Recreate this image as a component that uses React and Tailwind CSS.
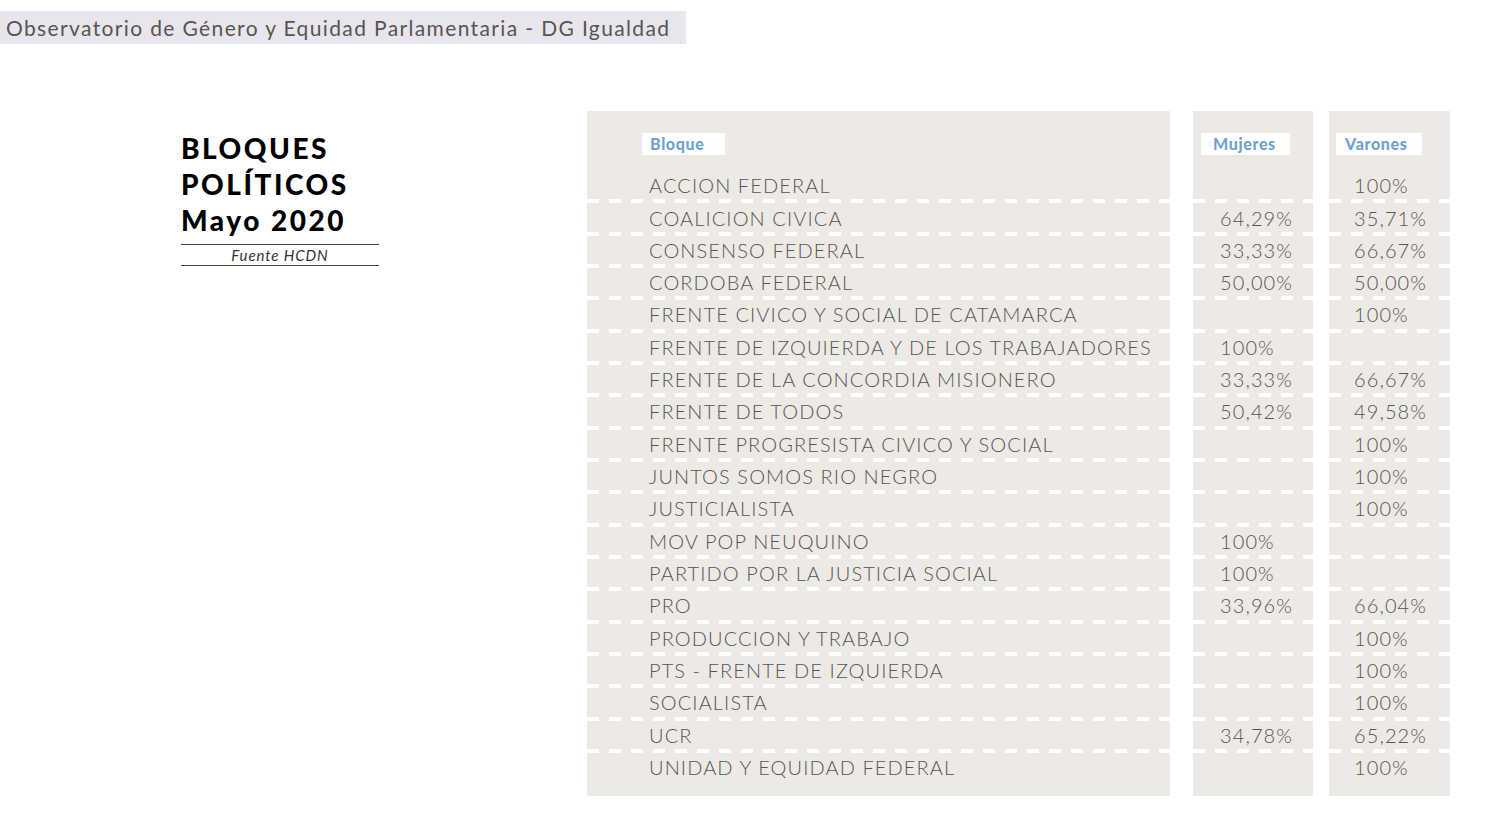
import React from 'react';

const rows = [
  ['ACCION FEDERAL', '', '100%'],
  ['COALICION CIVICA', '64,29%', '35,71%'],
  ['CONSENSO FEDERAL', '33,33%', '66,67%'],
  ['CORDOBA FEDERAL', '50,00%', '50,00%'],
  ['FRENTE CIVICO Y SOCIAL DE CATAMARCA', '', '100%'],
  ['FRENTE DE IZQUIERDA Y DE LOS TRABAJADORES', '100%', ''],
  ['FRENTE DE LA CONCORDIA MISIONERO', '33,33%', '66,67%'],
  ['FRENTE DE TODOS', '50,42%', '49,58%'],
  ['FRENTE PROGRESISTA CIVICO Y SOCIAL', '', '100%'],
  ['JUNTOS SOMOS RIO NEGRO', '', '100%'],
  ['JUSTICIALISTA', '', '100%'],
  ['MOV POP NEUQUINO', '100%', ''],
  ['PARTIDO POR LA JUSTICIA SOCIAL', '100%', ''],
  ['PRO', '33,96%', '66,04%'],
  ['PRODUCCION Y TRABAJO', '', '100%'],
  ['PTS - FRENTE DE IZQUIERDA', '', '100%'],
  ['SOCIALISTA', '', '100%'],
  ['UCR', '34,78%', '65,22%'],
  ['UNIDAD Y EQUIDAD FEDERAL', '', '100%'],
];

const dash = 'h-[4px] bg-[repeating-linear-gradient(90deg,#ffffff_0px,#ffffff_12px,transparent_12px,transparent_22px)]';

function Column({ width, label, labelBox, cellPad, idx }) {
  return (
    <div className={`${width} bg-[#edeae6] pt-[22px] pb-[15px] flex flex-col`}>
      <div className={`h-[22px] bg-white text-[16px] font-black tracking-[0.04em] text-[#6fa3cf] leading-[22px] ${labelBox}`}>
        {label}
      </div>
      <div className="mt-[16px] flex flex-col">
        {rows.map((r, i) => (
          <React.Fragment key={i}>
            <div className={`h-[28.33px] flex items-center whitespace-nowrap text-[20px] font-light tracking-[0.055em] text-[#555555] ${cellPad}`}>
              {r[idx]}
            </div>
            {i < rows.length - 1 && <div className={dash} />}
          </React.Fragment>
        ))}
      </div>
    </div>
  );
}

export default function App() {
  return (
    <div className="min-h-screen w-full bg-white font-['Lato',sans-serif]">
      <div className="pt-[11px]">
        <div className="w-[686px] h-[33px] bg-[#e9e5ec] pl-[6px] flex items-center text-[21px] text-[#555555] tracking-[0.065em] whitespace-nowrap">
          Observatorio de Género y Equidad Parlamentaria - DG Igualdad
        </div>
      </div>

      <div className="flex mt-[67px]">
        <div className="w-[587px] pl-[181px] pt-[19px]">
          <h1 className="text-[28px] font-black leading-[36px] text-black tracking-[0.09em]">
            BLOQUES<br />POLÍTICOS<br />Mayo 2020
          </h1>
          <div className="w-[198px] mt-[6px] border-t border-b border-[#444444] h-[22px] flex items-center justify-center text-[15px] italic text-[#333333] tracking-[0.06em]">
            Fuente HCDN
          </div>
        </div>

        <div className="flex">
          <Column width="w-[583px]" label="Bloque" labelBox="ml-[55px] w-[83px] pl-[8px]" cellPad="pl-[62px]" idx={0} />
          <div className="w-[23px]" />
          <Column width="w-[120px]" label="Mujeres" labelBox="ml-[8px] w-[89px] pl-[12px]" cellPad="pl-[27px]" idx={1} />
          <div className="w-[16px]" />
          <Column width="w-[121px]" label="Varones" labelBox="ml-[7px] w-[86px] pl-[9px]" cellPad="pl-[25px]" idx={2} />
        </div>
      </div>
    </div>
  );
}
